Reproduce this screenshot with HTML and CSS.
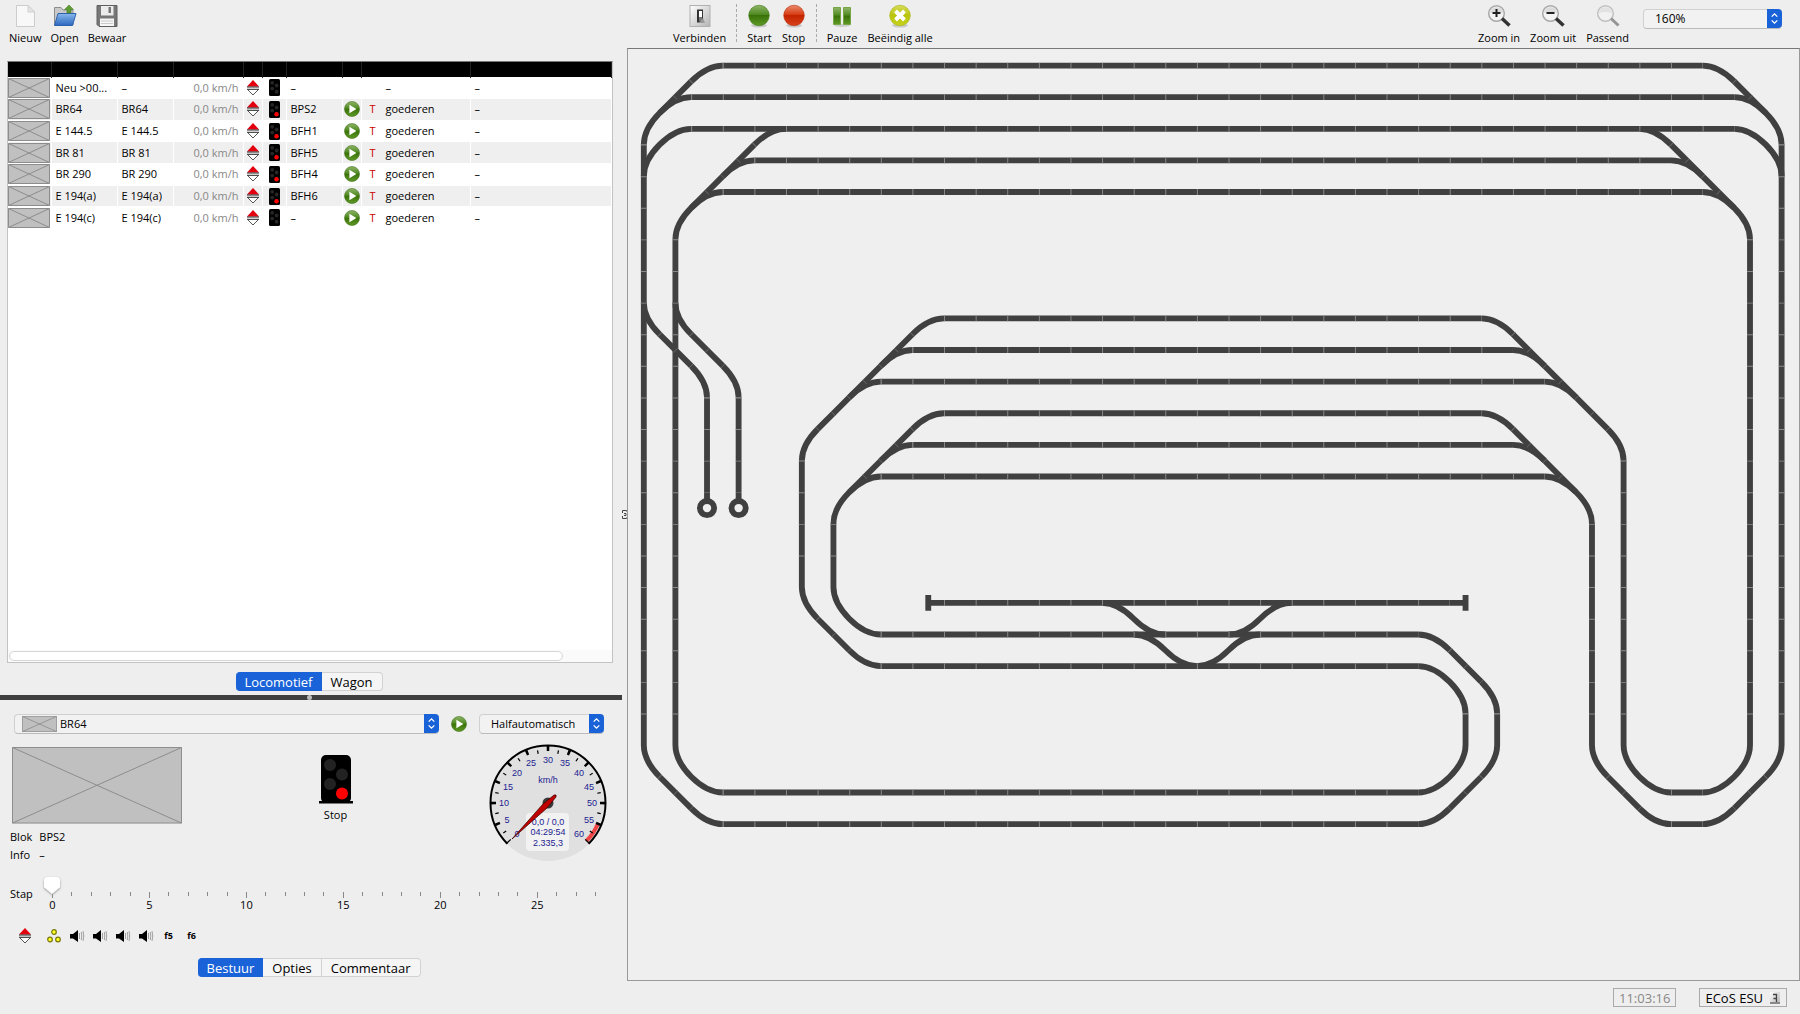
FILE: index.html
```
<!DOCTYPE html>
<html lang="nl">
<head>
    <meta charset="UTF-8">
    <meta name="viewport" content="width=device-width, initial-scale=1.0">
    <title>Treinbesturing</title>
    <link rel="stylesheet" href="styles.css">
</head>
<body>
    <!-- Gedeelde symbolen -->
    <svg class="defs" width="0" height="0" aria-hidden="true">
        <defs>
            <linearGradient id="gGreen" x1="0" y1="0" x2="0" y2="1">
                <stop offset="0" stop-color="#8fb56a"/><stop offset=".45" stop-color="#4f8a20"/><stop offset=".5" stop-color="#3a7209"/><stop offset="1" stop-color="#5f9a26"/>
            </linearGradient>
            <linearGradient id="gRed" x1="0" y1="0" x2="0" y2="1">
                <stop offset="0" stop-color="#ea8a6c"/><stop offset=".45" stop-color="#d63d15"/><stop offset=".5" stop-color="#c42400"/><stop offset="1" stop-color="#d8401c"/>
            </linearGradient>
            <linearGradient id="gLime" x1="0" y1="0" x2="0" y2="1">
                <stop offset="0" stop-color="#d6dc5a"/><stop offset=".5" stop-color="#b9c40c"/><stop offset="1" stop-color="#c6d21c"/>
            </linearGradient>
            <linearGradient id="gGrey" x1="0" y1="0" x2="1" y2="1">
                <stop offset="0" stop-color="#ffffff"/><stop offset="1" stop-color="#b4b4b4"/>
            </linearGradient>
            <linearGradient id="gBlue" x1="0" y1="0" x2="0" y2="1">
                <stop offset="0" stop-color="#8ab8ec"/><stop offset="1" stop-color="#2a68c0"/>
            </linearGradient>
        </defs>
        <symbol id="arrows" viewBox="0 0 14 16">
            <path d="M7 0 13 6.500H1Z" fill="#e3000f"/>
            <path d="M1 7H13M1 9.300H13" stroke="#222" stroke-width="1"/>
            <path d="M2 10 7 15 12 10" fill="#fff" stroke="#555" stroke-width="1"/>
        </symbol>
        <symbol id="play" viewBox="0 0 16 16">
            <circle cx="8" cy="8" r="7.500" fill="url(#gGreen)" stroke="#3f7016" stroke-width=".6"/>
            <path d="M5.400 3.800 12.400 8 5.400 12.200Z" fill="#fff"/>
        </symbol>
        <symbol id="lights" viewBox="0 0 11 17">
            <rect width="11" height="17" rx="1.500" fill="#000"/>
            <circle cx="3.200" cy="3.800" r="1.900" fill="#262626"/><circle cx="7.600" cy="6.500" r="1.900" fill="#262626"/>
            <circle cx="3.200" cy="9.600" r="1.900" fill="#262626"/><circle cx="7.600" cy="12.700" r="1.900" fill="#262626"/>
        </symbol>
        <symbol id="lightsRed" viewBox="0 0 11 17">
            <use href="#lights"/>
            <circle cx="7.500" cy="13.300" r="2.200" fill="#f00"/>
        </symbol>
        <symbol id="noimg" viewBox="0 0 42 20" preserveAspectRatio="none">
            <path d="M.5.5H41.500V19.500H.5ZL41.500 19.500M41.500.5.5 19.500" fill="#c0c0c0" stroke="#8c8c8c"/>
        </symbol>
        <symbol id="updown" viewBox="0 0 15 19">
            <path d="M4.700 7.600 7.500 4.800 10.300 7.600M4.700 11.400 7.500 14.200 10.300 11.400" fill="none" stroke="#fff" stroke-width="1.300"/>
        </symbol>
        <symbol id="speaker" viewBox="0 0 16 14">
            <path d="M1 5H4L9 1V13L4 9.500H1Z" fill="#000"/>
            <path d="M10.500 4V10M12.300 3Q13.300 7 12.300 11M14 2Q15.500 7 14 12" fill="none" stroke="#999" stroke-width=".9"/>
        </symbol>
        <symbol id="lens" viewBox="0 0 24 24">
            <circle cx="9.500" cy="9.500" r="7.800" fill="#f4f4f4" stroke="#a8a8a8" stroke-width="1.500"/>
            <path d="M2.800 9Q9.500 7 16.200 9A6.800 6.800 0 0 0 2.800 9" fill="#dcdcdc"/>
        </symbol>
    </svg>

    <header class="toolbar">
        <div class="tools tools-file">
            <button class="tool"><svg width="24" height="24" viewBox="0 0 24 24"><path d="M3.500 1.500H15L21.500 8V22.500H3.500Z" fill="#f8f8f8" stroke="#ccc"/><path d="M15 1.500V8H21.500Z" fill="#e4e4e4" stroke="#d0d0d0"/></svg>Nieuw</button>
            <button class="tool"><svg width="24" height="24" viewBox="0 0 24 24"><path d="M1.500 21V3.500H8L10 6H20V21Z" fill="#c9c9c9" stroke="#8d8d8d"/><path d="M5 9.500H23L19.500 21.500H1.500Z" fill="url(#gBlue)" stroke="#2c62ad"/><path d="M16 1 20.500 5.500H18V9H14V5.500H11.500Z" fill="#5f9c33" stroke="#4a7e25" stroke-width=".6"/></svg>Open</button>
            <button class="tool"><svg width="24" height="24" viewBox="0 0 24 24"><path d="M2 1.500H22V22.500H4L2 20.500Z" fill="#777" stroke="#606060"/><path d="M6 2H18.500V11.500H6Z" fill="#ececec"/><path d="M13.500 3H16V9H13.500Z" fill="#777"/><path d="M5 14.500H19V22H5Z" fill="#f6f6f6"/><path d="M6 17H18M6 19.500H18" stroke="#ccc"/></svg>Bewaar</button>
        </div>
        <div class="tools tools-run">
            <button class="tool"><svg width="24" height="24" viewBox="0 0 24 24"><rect x="2" y="1.500" width="20" height="21" fill="url(#gGrey)" stroke="#b0b0b0"/><path d="M9 5.500H15V18.500H9Z" fill="#333"/><path d="M11 7H14V13H11Z" fill="#fff"/><path d="M11 13H14V17.500H11Z" fill="#777"/><path d="M15 14 17 19 11 19Z" fill="#999"/></svg>Verbinden</button>
            <span class="sep"></span>
            <button class="tool"><svg width="24" height="24" viewBox="0 0 24 24"><ellipse cx="12" cy="21.500" rx="8" ry="2" fill="#c9c9c9"/><circle cx="12" cy="11.500" r="10.300" fill="url(#gGreen)" stroke="#3f7a12" stroke-width=".6"/></svg>Start</button>
            <button class="tool"><svg width="24" height="24" viewBox="0 0 24 24"><ellipse cx="12" cy="21.500" rx="8" ry="2" fill="#c9c9c9"/><circle cx="12" cy="11.500" r="10.300" fill="url(#gRed)" stroke="#b93010" stroke-width=".6"/></svg>Stop</button>
            <span class="sep"></span>
            <button class="tool"><svg width="24" height="24" viewBox="0 0 24 24"><ellipse cx="12" cy="21.500" rx="8" ry="1.500" fill="#ccc"/><path d="M3.500 3.500H10.500V20.500H3.500ZM13.500 3.500H20.500V20.500H13.500Z" fill="url(#gGreen)" stroke="#77a744"/></svg>Pauze</button>
            <button class="tool"><svg width="24" height="24" viewBox="0 0 24 24"><ellipse cx="12" cy="21.500" rx="8" ry="2" fill="#c9c9c9"/><circle cx="12" cy="11.500" r="10.300" fill="url(#gLime)" stroke="#a9b412" stroke-width=".6"/><path d="M7.500 7 16.500 16M16.500 7 7.500 16" stroke="#fff" stroke-width="4"/></svg>Beëindig alle</button>
        </div>
        <div class="tools tools-zoom">
            <button class="tool"><svg width="24" height="24" viewBox="0 0 24 24"><use href="#lens"/><path d="M15 14.500 22.500 21.500" stroke="#333" stroke-width="3.500"/><path d="M5.500 9H13.500M9.500 5V13" stroke="#222" stroke-width="2"/></svg>Zoom in</button>
            <button class="tool"><svg width="24" height="24" viewBox="0 0 24 24"><use href="#lens"/><path d="M15 14.500 22.500 21.500" stroke="#333" stroke-width="3.500"/><path d="M5.500 9H13.500" stroke="#222" stroke-width="2"/></svg>Zoom uit</button>
            <button class="tool"><svg width="24" height="24" viewBox="0 0 24 24" opacity=".65"><use href="#lens"/><path d="M15 14.500 22.500 21.500" stroke="#666" stroke-width="3"/></svg>Passend</button>
            <div class="combo combo-zoom">
                <select aria-label="Zoom"><option>160%</option></select>
                <svg class="stepper" width="15" height="19"><use href="#updown"/></svg>
            </div>
        </div>
    </header>

    <div class="workspace">
        <aside class="side">
            <div class="list">
                <table class="locos">
                    <colgroup>
                        <col class="c-img"><col class="c-name"><col class="c-desc"><col class="c-speed"><col class="c-dir"><col class="c-signal"><col class="c-block"><col class="c-play"><col class="c-type"><col>
                    </colgroup>
                    <thead>
                        <tr><th></th><th></th><th></th><th></th><th></th><th></th><th></th><th></th><th></th><th></th></tr>
                    </thead>
                    <tbody>
                        <tr><td class="pic"><svg width="42" height="20"><use href="#noimg"/></svg></td><td>Neu &gt;00...</td><td>–</td><td class="speed">0,0 km/h</td><td class="ico"><svg width="14" height="16"><use href="#arrows"/></svg></td><td class="ico"><svg width="11" height="17"><use href="#lights"/></svg></td><td>–</td><td class="ico"></td><td><span class="mark"></span>–</td><td>–</td></tr>
                        <tr><td class="pic"><svg width="42" height="20"><use href="#noimg"/></svg></td><td>BR64</td><td>BR64</td><td class="speed">0,0 km/h</td><td class="ico"><svg width="14" height="16"><use href="#arrows"/></svg></td><td class="ico"><svg width="11" height="17"><use href="#lightsRed"/></svg></td><td>BPS2</td><td class="ico"><svg width="16" height="16"><use href="#play"/></svg></td><td><span class="mark">T</span>goederen</td><td>–</td></tr>
                        <tr><td class="pic"><svg width="42" height="20"><use href="#noimg"/></svg></td><td>E 144.5</td><td>E 144.5</td><td class="speed">0,0 km/h</td><td class="ico"><svg width="14" height="16"><use href="#arrows"/></svg></td><td class="ico"><svg width="11" height="17"><use href="#lightsRed"/></svg></td><td>BFH1</td><td class="ico"><svg width="16" height="16"><use href="#play"/></svg></td><td><span class="mark">T</span>goederen</td><td>–</td></tr>
                        <tr><td class="pic"><svg width="42" height="20"><use href="#noimg"/></svg></td><td>BR 81</td><td>BR 81</td><td class="speed">0,0 km/h</td><td class="ico"><svg width="14" height="16"><use href="#arrows"/></svg></td><td class="ico"><svg width="11" height="17"><use href="#lightsRed"/></svg></td><td>BFH5</td><td class="ico"><svg width="16" height="16"><use href="#play"/></svg></td><td><span class="mark">T</span>goederen</td><td>–</td></tr>
                        <tr><td class="pic"><svg width="42" height="20"><use href="#noimg"/></svg></td><td>BR 290</td><td>BR 290</td><td class="speed">0,0 km/h</td><td class="ico"><svg width="14" height="16"><use href="#arrows"/></svg></td><td class="ico"><svg width="11" height="17"><use href="#lightsRed"/></svg></td><td>BFH4</td><td class="ico"><svg width="16" height="16"><use href="#play"/></svg></td><td><span class="mark">T</span>goederen</td><td>–</td></tr>
                        <tr><td class="pic"><svg width="42" height="20"><use href="#noimg"/></svg></td><td>E 194(a)</td><td>E 194(a)</td><td class="speed">0,0 km/h</td><td class="ico"><svg width="14" height="16"><use href="#arrows"/></svg></td><td class="ico"><svg width="11" height="17"><use href="#lightsRed"/></svg></td><td>BFH6</td><td class="ico"><svg width="16" height="16"><use href="#play"/></svg></td><td><span class="mark">T</span>goederen</td><td>–</td></tr>
                        <tr><td class="pic"><svg width="42" height="20"><use href="#noimg"/></svg></td><td>E 194(c)</td><td>E 194(c)</td><td class="speed">0,0 km/h</td><td class="ico"><svg width="14" height="16"><use href="#arrows"/></svg></td><td class="ico"><svg width="11" height="17"><use href="#lights"/></svg></td><td>–</td><td class="ico"><svg width="16" height="16"><use href="#play"/></svg></td><td><span class="mark">T</span>goederen</td><td>–</td></tr>
                    </tbody>
                </table>
                <div class="scrollbar"><div class="thumb"></div></div>
            </div>
            <nav class="tabs tabs-top">
                <button class="active">Locomotief</button><button>Wagon</button>
            </nav>
            <div class="splitter"><span></span></div>

            <section class="control">
                <div class="pickers">
                    <div class="combo combo-loco">
                        <svg class="loco-thumb" width="35" height="16"><use href="#noimg"/></svg>
                        <select aria-label="Locomotief"><option>BR64</option></select>
                        <svg class="stepper" width="15" height="19"><use href="#updown"/></svg>
                    </div>
                    <button class="plain" aria-label="Start"><svg width="16" height="16"><use href="#play"/></svg></button>
                    <div class="combo combo-mode">
                        <select aria-label="Modus"><option>Halfautomatisch</option></select>
                        <svg class="stepper" width="15" height="19"><use href="#updown"/></svg>
                    </div>
                </div>

                <div class="status-row">
                    <div class="info">
                        <svg class="photo" viewBox="0 0 171 77"><path d="M.5.5H170.500V76.500H.5ZL170.500 76.500M170.500.5.5 76.500" fill="#c0c0c0" stroke="#8c8c8c"/></svg>
                        <dl>
                            <dt>Blok</dt><dd>BPS2</dd>
                            <dt>Info</dt><dd>–</dd>
                        </dl>
                    </div>
                    <div class="signal">
                        <svg width="34" height="50" viewBox="0 0 34 50">
                            <rect x="2" y="1" width="30" height="48" rx="5"/><path d="M0 47H34V49.500H0Z"/>
                            <circle cx="11" cy="11" r="6" fill="#222"/><circle cx="23" cy="20.500" r="6" fill="#222"/>
                            <circle cx="11" cy="30" r="6" fill="#222"/><circle cx="23" cy="39.500" r="6" fill="#f00"/>
                        </svg>
                        Stop
                    </div>
                    <svg class="gauge" width="118" height="118" viewBox="-59 -59 118 118">
                        <circle r="58" fill="#e0e0e0"/>
                        <path d="M49.900 20.700A54 54 0 0 1 38.200 38.200" fill="none" stroke="#ee4444" stroke-width="4"/>
                        <g fill="none" stroke="#000">
                            <path d="M-40.700 40.700A57.500 57.500 0 1 1 40.700 40.700" stroke-width="2"/>
                            <path d="M-38.900 38.900A55 55 0 1 1 38.900 38.900" stroke-width="6" pathLength="240" stroke-dasharray="2.400 17.600" stroke-dashoffset="1.200"/>
                            <path d="M-36.800 36.800A52 52 0 1 1 36.800 36.800" stroke-width="3.500" pathLength="240" stroke-dasharray="0 9.400 1.200 9.400"/>
                        </g>
                        <rect x="-22" y="10" width="43" height="38" rx="4" fill="#f2f2f2"/>
                        <circle r="5.500" fill="#3a3a3a"/>
                        <g class="gauge-text">
                            <text x="-31" y="34">0</text><text x="-41" y="20">5</text><text x="-44" y="3">10</text>
                            <text x="-40" y="-13">15</text><text x="-31" y="-27">20</text><text x="-17" y="-37">25</text>
                            <text x="0" y="-40">30</text><text x="17" y="-37">35</text><text x="31" y="-27">40</text>
                            <text x="41" y="-13">45</text><text x="44" y="3">50</text><text x="41" y="20">55</text><text x="31" y="34">60</text>
                            <text x="0" y="-20">km/h</text>
                            <text x="0" y="22">0,0 / 0,0</text><text x="0" y="32">04:29:54</text><text x="0" y="43">2.335,3</text>
                        </g>
                        <path d="M-36 36-5 1 6-8Q9-9 8-6L-1 5Z" fill="#c00000" stroke="#300" stroke-width=".7"/>
                    </svg>
                </div>

                <div class="step-row">
                    <label for="step">Stap</label>
                    <div class="slider">
                        <input type="range" id="step" min="0" max="28" value="0">
                        <div class="ticks">
                            <span class="major">0</span><span></span><span></span><span></span><span></span>
                            <span class="major">5</span><span></span><span></span><span></span><span></span>
                            <span class="major">10</span><span></span><span></span><span></span><span></span>
                            <span class="major">15</span><span></span><span></span><span></span><span></span>
                            <span class="major">20</span><span></span><span></span><span></span><span></span>
                            <span class="major">25</span><span></span><span></span><span></span>
                        </div>
                    </div>
                </div>

                <div class="functions">
                    <button class="plain dir" aria-label="Richting"><svg width="14" height="16"><use href="#arrows"/></svg></button>
                    <button class="plain" aria-label="Licht"><svg width="14" height="14" viewBox="0 0 14 14" fill="#ff2" stroke="#77770a" stroke-width="1.200"><circle cx="7" cy="3" r="2.300"/><circle cx="3" cy="10.500" r="2.300"/><circle cx="11" cy="10.500" r="2.300"/></svg></button>
                    <button class="plain" aria-label="f1"><svg width="16" height="14"><use href="#speaker"/></svg></button>
                    <button class="plain" aria-label="f2"><svg width="16" height="14"><use href="#speaker"/></svg></button>
                    <button class="plain" aria-label="f3"><svg width="16" height="14"><use href="#speaker"/></svg></button>
                    <button class="plain" aria-label="f4"><svg width="16" height="14"><use href="#speaker"/></svg></button>
                    <button class="plain">f5</button>
                    <button class="plain">f6</button>
                </div>
            </section>
            <nav class="tabs">
                <button class="active">Bestuur</button><button>Opties</button><button>Commentaar</button>
            </nav>
        </aside>

        <div class="grip"><svg width="5" height="9" viewBox="0 0 5 9"><path d="M4.500 1.500V.5H.5V3M4.500 7.500V8.500H.5V6M2 3.500H4V5.500H2" fill="none" stroke="#444"/></svg></div>

        <main class="plan">
            <!-- Eén vak is 20 eenheden -->
            <svg viewBox="-10 -10.500 741 590">
                <defs>
                    <path id="straight" d="M50 0H670M30 20H690M30 40H690M70 60H650M50 80H670
                        M0 50V430M20 110V430M700 110V430M720 50V430
                        M190 160H530M170 180H550M150 200H570M190 220H530M170 240H550M150 260H570
                        M100 250V330M120 290V330M600 290V430M620 250V430
                        M190 340H510M150 360H490M150 380H490M50 460H490M50 480H490
                        M650 460H670M650 480H670M520 410V430M540 410V430
                        M40 210V270M60 210V270"/>
                    <path id="diagonal" d="M30 10 10 30M70 50 30 90M690 10 710 30M650 50 690 90
                        M170 170 110 230M170 230 130 270M550 170 610 230M550 230 590 270
                        M110 350 130 370M510 370 530 390M530 450 510 470M10 450 30 470
                        M610 450 630 470M710 450 690 470M10 170 30 190M30 170 50 190"/>
                </defs>
                <g class="track">
                    <use href="#straight"/>
                    <use href="#diagonal"/>
                    <!-- Bogen en wissels boven -->
                    <path d="M50 0Q40 0 30 10M30 20Q20 20 10 30Q0 40 0 50M30 40Q20 40 10 50Q0 60 0 70
                        M90 40Q80 40 70 50M70 60Q60 60 50 70M50 80Q40 80 30 90Q20 100 20 110
                        M670 0Q680 0 690 10M690 20Q700 20 710 30Q720 40 720 50M690 40Q700 40 710 50Q720 60 720 70
                        M630 40Q640 40 650 50M650 60Q660 60 670 70M670 80Q680 80 690 90Q700 100 700 110"/>
                    <!-- Kopsporen links -->
                    <path d="M0 150Q0 160 10 170M30 190Q40 200 40 210M20 150Q20 160 30 170M50 190Q60 200 60 210M40 270V276M60 270V276"/>
                    <circle cx="40" cy="280" r="4.500"/><circle cx="60" cy="280" r="4.500"/>
                    <!-- Opstelsporen midden -->
                    <path d="M190 160Q180 160 170 170M170 180Q160 180 150 190M150 200Q140 200 130 210
                        M110 230Q100 240 100 250M530 160Q540 160 550 170M550 180Q560 180 570 190
                        M570 200Q580 200 590 210M610 230Q620 240 620 250
                        M190 220Q180 220 170 230M170 240Q160 240 150 250M150 260Q140 260 130 270Q120 280 120 290
                        M530 220Q540 220 550 230M550 240Q560 240 570 250M570 260Q580 260 590 270Q600 280 600 290"/>
                    <!-- Onderste lussen -->
                    <path d="M100 330Q100 340 110 350M130 370Q140 380 150 380M120 330Q120 340 130 350Q140 360 150 360
                        M490 360Q500 360 510 370M530 390Q540 400 540 410M490 380Q500 380 510 390Q520 400 520 410
                        M540 430Q540 440 530 450M510 470Q500 480 490 480M520 430Q520 440 510 450Q500 460 490 460
                        M0 430Q0 440 10 450M30 470Q40 480 50 480M20 430Q20 440 30 450Q40 460 50 460
                        M600 430Q600 440 610 450M630 470Q640 480 650 480M620 430Q620 440 630 450Q640 460 650 460
                        M720 430Q720 440 710 450M690 470Q680 480 670 480M700 430Q700 440 690 450Q680 460 670 460"/>
                    <!-- Wisselstraat en stootjukken -->
                    <path d="M290 340Q300 340 310 350Q320 360 330 360M310 360Q320 360 330 370Q340 380 350 380
                        Q360 380 370 370Q380 360 390 360M370 360Q380 360 390 350Q400 340 410 340
                        M180 340H190M510 340H520M180 335V345M520 335V345"/>
                </g>
                <g class="joints">
                    <use href="#straight"/>
                    <use href="#diagonal" class="slant"/>
                </g>
            </svg>
        </main>
    </div>

    <footer class="statusbar">
        <span class="field clock">11:03:16</span>
        <span class="field">ECoS ESU
            <svg width="12" height="12" viewBox="0 0 12 12"><path d="M1 0H11V12H1Z" fill="url(#gGrey)"/><path d="M4 2.500H7.500V10.500M4.500 6.500H7.500" fill="none" stroke="#444" stroke-width="1.300"/><path d="M1 11H11" stroke="#888" stroke-width="2"/></svg>
        </span>
    </footer>
</body>
</html>
```
FILE: styles.css
```
* {
    box-sizing: border-box;
}

body, html {
    margin: 0;
    padding: 0;
    height: 100%;
}

body {
    display: flex;
    flex-direction: column;
    background-color: #eee;
    color: #000;
    font-family: "Open Sans", "Noto Sans", sans-serif;
    font-size: 11px;
    font-weight: 500;
    line-height: 16px;
}

button, select {
    font: inherit;
    color: inherit;
    border: none;
    background: none;
    padding: 0;
    margin: 0;
}

svg {
    display: block;
}

.defs {
    position: absolute;
}

/* Werkbalk */
.toolbar {
    display: grid;
    grid-template-columns: 626px 1fr auto;
    height: 48px;
    padding-top: 4px;
}

.tools {
    display: flex;
    align-items: flex-start;
    gap: 10px;
}

.tools-file {
    gap: 9px;
    padding-left: 9px;
}

.tools-run {
    padding-left: 47px;
}

.tools-zoom {
    padding-right: 18px;
}

.tool {
    display: flex;
    flex-direction: column;
    align-items: center;
    gap: 2px;
}

.sep {
    height: 38px;
    border-left: 1px dashed #aaa;
}

/* Keuzelijsten */
.combo {
    position: relative;
    display: flex;
    height: 20px;
    border: 1px solid #d0d0d0;
    border-bottom-color: #bbb;
    border-radius: 4px;
    background-color: #f2f2f2;
}

.combo select {
    flex: 1;
    appearance: none;
    padding-left: 11px;
    outline: none;
}

.stepper {
    position: absolute;
    top: -1px;
    right: -1px;
    height: 19px;
    border-radius: 0 4px 4px 0;
    background-color: #1a62d8;
    pointer-events: none;
}

.combo-zoom {
    width: 139px;
    margin: 5px 0 0 4px;
}

.combo-zoom select {
    font-size: 12px;
}

.combo-loco {
    flex: 1;
}

.combo-loco select {
    padding-left: 45px;
}

.loco-thumb {
    position: absolute;
    left: 7px;
    top: 1px;
}

.combo-mode {
    width: 125px;
}

/* Indeling */
.workspace {
    flex: 1;
    min-height: 0;
    display: grid;
    grid-template-columns: 622px 5px 1fr;
}

.side {
    display: flex;
    flex-direction: column;
    min-height: 0;
    padding-top: 13px;
}

.grip {
    display: flex;
    align-items: center;
}

.plan {
    min-height: 0;
    overflow: hidden;
    background-color: #efefef;
    border: 1px solid #999;
    border-top-color: #777;
}

.plan svg {
    width: 100%;
}

.track {
    fill: none;
    stroke: #404040;
    stroke-width: 3.7;
}

/* Lasnaden tussen de vakken */
.joints {
    fill: none;
    stroke: #8a8a8a;
    stroke-width: 3.7;
    stroke-dasharray: .6 19.4;
}

.slant {
    stroke: #666;
    stroke-dasharray: .5 13.642;
}

/* Locomotieflijst */
.list {
    flex: 1;
    display: flex;
    flex-direction: column;
    justify-content: space-between;
    margin: 0 9px 0 7px;
    border: 1px solid #c3c3c3;
    border-top-color: #777;
    background-color: #fff;
}

.locos {
    width: 100%;
    height: 166px;
    table-layout: fixed;
    border-collapse: collapse;
}

.c-img { width: 43px; }
.c-name { width: 66px; }
.c-desc { width: 56px; }
.c-speed { width: 70px; }
.c-dir { width: 19px; }
.c-signal { width: 24px; }
.c-block { width: 56px; }
.c-play { width: 19px; }
.c-type { width: 109px; }

.locos th {
    height: 15px;
    padding: 0;
    background-color: #000;
    border-right: 1px solid #222;
}

.locos td {
    padding: 0 4px;
    border-right: 1px solid #fff;
    border-top: 1px solid #fff;
    white-space: nowrap;
    overflow: hidden;
}

.locos tbody tr:nth-child(even) {
    background-color: #efefef;
}

.locos td.pic {
    padding: 0;
}

.locos td.ico {
    padding: 0;
}

.ico svg {
    margin: 0 auto;
}

.locos td.speed {
    text-align: right;
    color: #888;
}

.mark {
    display: inline-block;
    width: 20px;
    padding-left: 4px;
    color: #c00;
}

.scrollbar {
    height: 12px;
    padding: 1px;
    background-color: #fafafa;
}

.thumb {
    width: 92%;
    height: 10px;
    border: 1px solid #d6d6d6;
    border-radius: 5px;
    background-color: #fff;
}

/* Tabbladen */
.tabs {
    display: flex;
    justify-content: center;
    padding-bottom: 4px;
    margin-right: 3px;
}

.tabs-top {
    padding-top: 9px;
}

.tabs button {
    height: 19px;
    padding: 0 9px;
    border: 1px solid #d2d2d2;
    border-left-width: 0;
    background-color: #f5f5f5;
    font-size: 13px;
    line-height: 16px;
}

.tabs button:last-child {
    border-radius: 0 4px 4px 0;
}

.tabs .active {
    padding: 0 8px;
    border-color: #1a62d8;
    border-radius: 4px 0 0 4px;
    background-color: #1a62d8;
    color: #fff;
}

.splitter {
    display: flex;
    justify-content: center;
    height: 5px;
    padding-right: 4px;
    background-color: #3f3f3f;
}

.splitter span {
    width: 5px;
    border-radius: 3px;
    background-color: #bbb;
}

/* Bediening */
.control {
    padding-top: 14px;
}

.pickers {
    display: flex;
    align-items: center;
    gap: 12px;
    padding: 0 18px 0 14px;
}

.plain {
    display: flex;
    align-items: center;
    justify-content: center;
}

.status-row {
    display: flex;
    align-items: flex-start;
    padding: 10px 15px 0 10px;
}

.info svg {
    width: 170px;
    margin: 3px 0 0 2px;
}

.info dl {
    display: grid;
    grid-template-columns: auto 1fr;
    column-gap: 7px;
    margin: 4px 0 0;
    line-height: 18px;
}

.info dd {
    margin: 0;
}

.signal {
    flex: 1;
    display: flex;
    flex-direction: column;
    align-items: center;
    gap: 3px;
    padding-top: 10px;
}

.gauge-text {
    font-family: "Liberation Sans", Arial, sans-serif;
    font-size: 9px;
    fill: #1c1c90;
    text-anchor: middle;
}

.step-row {
    display: flex;
    padding: 13px 18px 0 10px;
    height: 51px;
}

.step-row label {
    width: 34px;
    padding-top: 9px;
}

.slider {
    flex: 1;
}

.slider input {
    appearance: none;
    display: block;
    width: 100%;
    height: 17px;
    margin: 0;
    background: none;
    filter: drop-shadow(0 1px 1px #999);
}

.slider input::-webkit-slider-thumb {
    appearance: none;
    width: 16px;
    height: 17px;
    border-radius: 3px;
    background-color: #fff;
    clip-path: polygon(0 0, 100% 0, 100% 60%, 50% 100%, 0 60%);
}

.ticks {
    display: flex;
    justify-content: space-between;
    margin: -2px 8px 0;
}

.ticks span {
    display: flex;
    flex-direction: column;
    align-items: center;
    width: 1px;
    line-height: 14px;
}

.ticks span::before {
    content: "";
    width: 1px;
    height: 4px;
    background-color: #888;
}

.ticks .major::before {
    height: 6px;
    flex-shrink: 0;
}

.functions {
    display: flex;
    align-items: center;
    height: 16px;
    margin: 13px 0 14px 18px;
}

.functions button {
    width: 23px;
    font-size: 9px;
    font-weight: 700;
}

.functions .dir {
    width: 14px;
    margin-right: 10px;
}

/* Statusbalk */
.statusbar {
    display: flex;
    justify-content: flex-end;
    gap: 23px;
    height: 33px;
    padding: 7px 13px 0 0;
}

.field {
    display: flex;
    align-items: center;
    gap: 6px;
    height: 19px;
    padding: 0 5px;
    border: 1px solid #aaa;
    font-size: 13px;
}

.clock {
    color: #888;
}
```
